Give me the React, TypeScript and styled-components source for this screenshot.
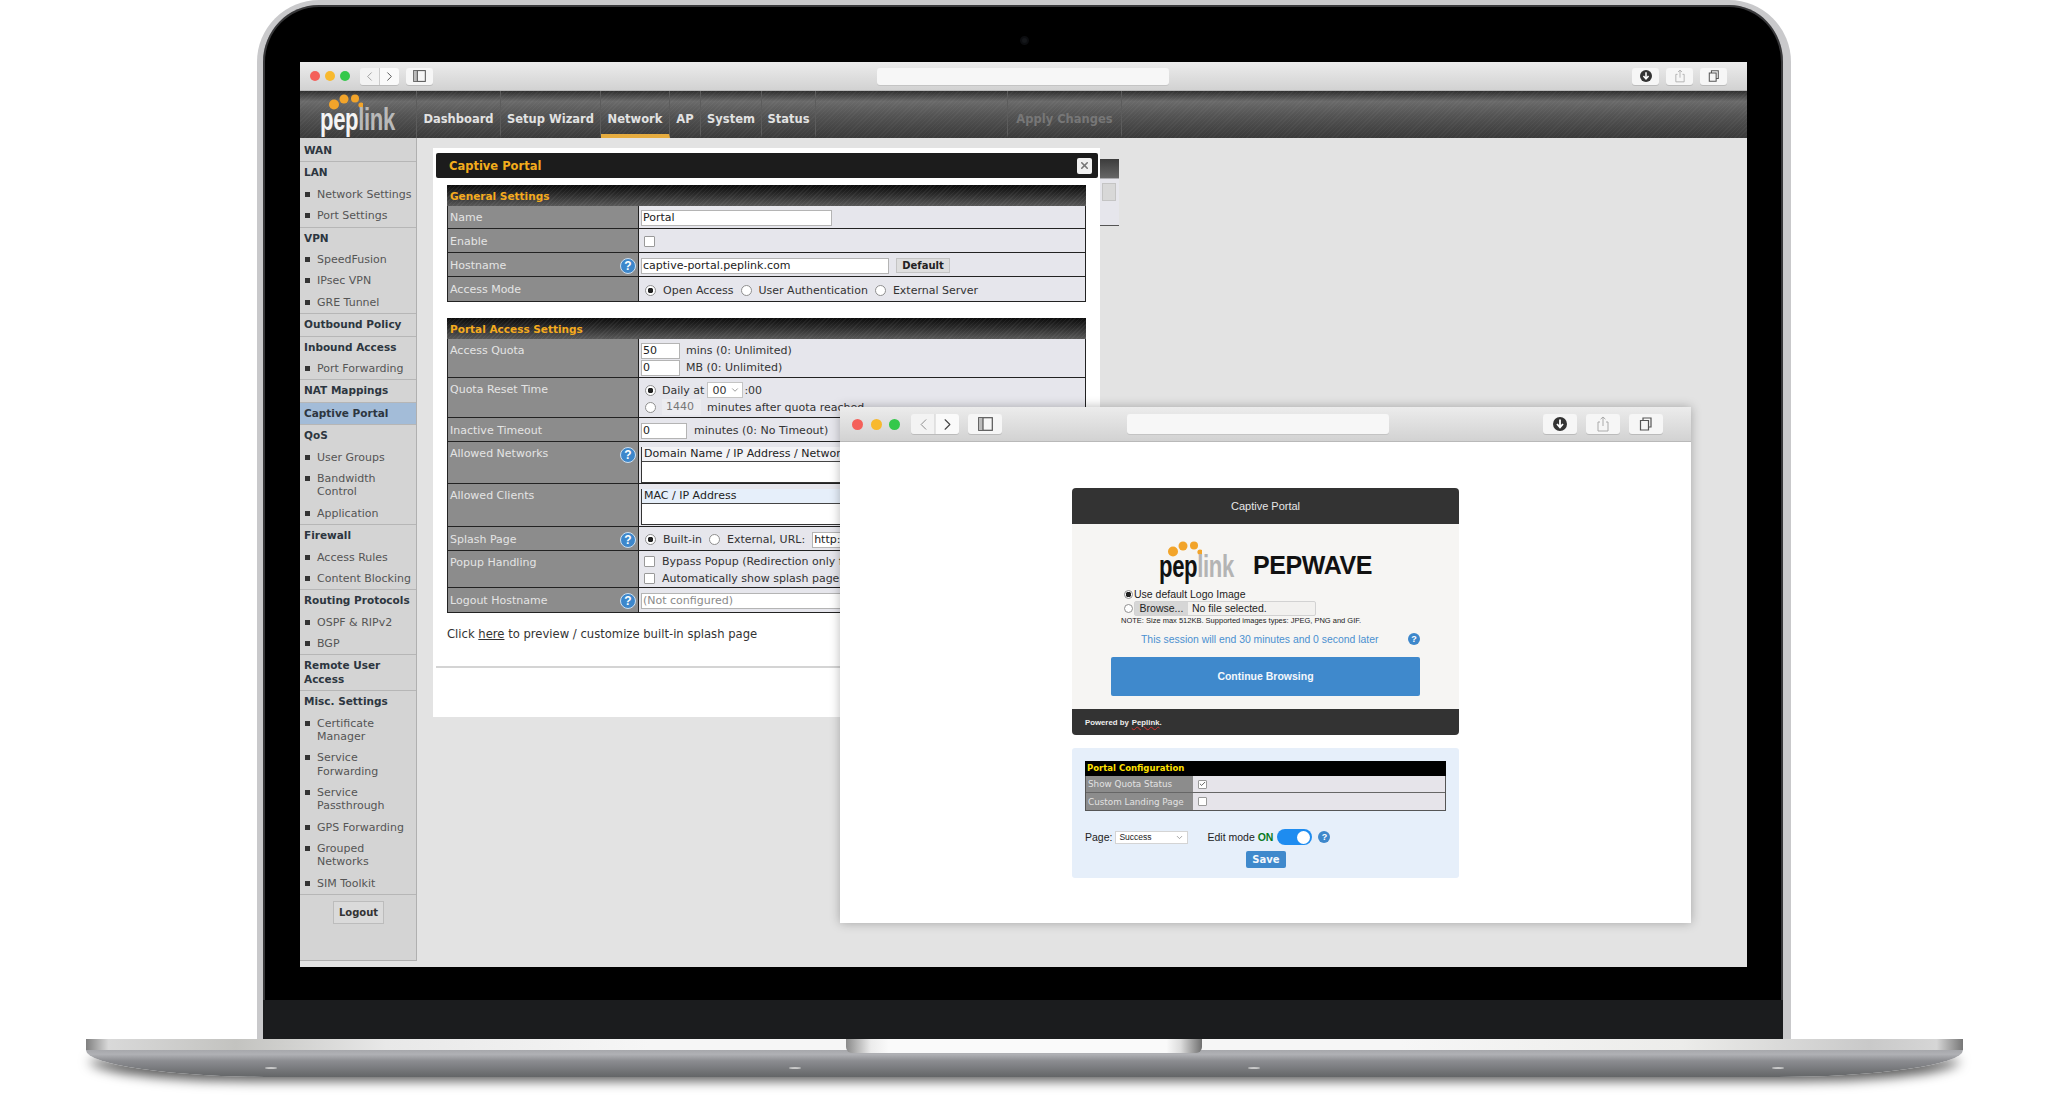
import React from "react"
import styled, { createGlobalStyle } from "styled-components"
import { ChevronLeft, ChevronRight, ChevronDown, X, Check } from "lucide-react"

const GlobalStyle = createGlobalStyle`
    html, body {
        margin: 0;
        padding: 0;
        background: #fff;
        font-family: "DejaVu Sans", Verdana, sans-serif;
    }
    * {
        box-sizing: border-box;
    }
`

const menu: { title: string; active?: boolean; items?: string[] }[] = [
    { title: "WAN" },
    { title: "LAN", items: ["Network Settings", "Port Settings"] },
    { title: "VPN", items: ["SpeedFusion", "IPsec VPN", "GRE Tunnel"] },
    { title: "Outbound Policy" },
    { title: "Inbound Access", items: ["Port Forwarding"] },
    { title: "NAT Mappings" },
    { title: "Captive Portal", active: true },
    { title: "QoS", items: ["User Groups", "Bandwidth Control", "Application"] },
    { title: "Firewall", items: ["Access Rules", "Content Blocking"] },
    { title: "Routing Protocols", items: ["OSPF & RIPv2", "BGP"] },
    { title: "Remote User Access" },
    {
        title: "Misc. Settings",
        items: [
            "Certificate Manager",
            "Service Forwarding",
            "Service Passthrough",
            "GPS Forwarding",
            "Grouped Networks",
            "SIM Toolkit",
        ],
    },
]

const tabs = [
    { label: "Dashboard", width: 84 },
    { label: "Setup Wizard", width: 100 },
    { label: "Network", width: 69, active: true },
    { label: "AP", width: 31 },
    { label: "System", width: 61 },
    { label: "Status", width: 54 },
]

const WindowBar: React.FC<{ $big?: boolean }> = ({ $big }) => (
    <Chrome $big={$big}>
        <Dots $big={$big}>
            <Dot $color="#f4605a" $big={$big} />
            <Dot $color="#f8b92e" $big={$big} />
            <Dot $color="#34c84a" $big={$big} />
        </Dots>
        <NavPair $big={$big}>
            <ChevronLeft size={$big ? 19 : 15} strokeWidth={1.2} color="#888" />
            <ChevronRight size={$big ? 19 : 15} strokeWidth={1.4} color="#444" />
        </NavPair>
        <ChromeBtn $big={$big}>
            <svg width={$big ? 15 : 13} height={$big ? 14 : 12} viewBox="0 0 15 14">
                <rect x="0.7" y="0.7" width="13.6" height="12.6" fill="none" stroke="#555" strokeWidth="1.2" />
                <rect x="1" y="1" width="4" height="12" fill="#bbb" />
                <path d="M5 1v12" stroke="#555" strokeWidth="1.2" />
            </svg>
        </ChromeBtn>
        <UrlBox $big={$big} />
        <ChromeBtn $big={$big}>
            <svg width={$big ? 14 : 12} height={$big ? 14 : 12} viewBox="0 0 14 14">
                <circle cx="7" cy="7" r="7" fill="#333" />
                <path d="M7 2.5v7M4 7l3 3.4L10 7" fill="none" stroke="#fff" strokeWidth="1.8" />
            </svg>
        </ChromeBtn>
        <ChromeBtn $big={$big}>
            <svg width={$big ? 12 : 10} height={$big ? 16 : 14} viewBox="0 0 12 16">
                <path d="M3 6H1v9h10V6H9M6 10V1M3.6 3.2 6 1l2.4 2.2" fill="none" stroke="#aaa" strokeWidth="1" />
            </svg>
        </ChromeBtn>
        <ChromeBtn $big={$big}>
            <svg width={$big ? 14 : 12} height={$big ? 14 : 12} viewBox="0 0 14 14">
                <path d="M4 3V1h8v9h-2M1.5 3.5h8v9.5h-8z" fill="none" stroke="#555" strokeWidth="1.2" />
            </svg>
        </ChromeBtn>
    </Chrome>
)

const Logo: React.FC<{ $dark?: boolean }> = ({ $dark }) => (
    <LogoBox>
        <LogoDots width="34" height="16" viewBox="0 0 34 16">
            <circle cx="5" cy="10.5" r="5" fill="#f2a42a" />
            <circle cx="15" cy="5" r="4.5" fill="#f2a42a" />
            <circle cx="26" cy="4.5" r="4" fill="#f2a42a" />
            <circle cx="32" cy="11" r="2.6" fill="#f2a42a" />
        </LogoDots>
        <LogoText $dark={$dark}>
            pep<span>link</span>
        </LogoText>
    </LogoBox>
)

const App: React.FC = () => {
    return (
        <Page>
            <GlobalStyle />
            <Lid>
                <Bezel>
                    <Camera />
                    <Screen>
                        <WindowBar />
                        <TopNav>
                            <LogoCell>
                                <Logo />
                            </LogoCell>
                            {tabs.map((t) => (
                                <Tab key={t.label} $active={t.active} $w={t.width}>
                                    {t.label}
                                </Tab>
                            ))}
                            <ApplyTab $w={115}>Apply Changes</ApplyTab>
                        </TopNav>
                        <Body>
                            <Sidebar>
                                {menu.map((g) => (
                                    <Group key={g.title}>
                                        <GroupTitle $active={g.active}>{g.title}</GroupTitle>
                                        {g.items?.map((i) => <MenuItem key={i}>{i}</MenuItem>)}
                                    </Group>
                                ))}
                                <LogoutWrap>
                                    <LogoutBtn>Logout</LogoutBtn>
                                </LogoutWrap>
                            </Sidebar>
                            <Content>
                                <Modal>
                                    <ModalTitle>
                                        Captive Portal
                                        <CloseBtn>
                                            <X size={11} strokeWidth={3.5} color="#777" />
                                        </CloseBtn>
                                    </ModalTitle>
                                    <FormTable>
                                        <TableHead>General Settings</TableHead>
                                        <Row $h={23}>
                                            <Label>Name</Label>
                                            <Value>
                                                <TextBox $w={191}>Portal</TextBox>
                                            </Value>
                                        </Row>
                                        <Row $h={24}>
                                            <Label>Enable</Label>
                                            <Value>
                                                <Tick />
                                            </Value>
                                        </Row>
                                        <Row $h={24}>
                                            <Label>
                                                Hostname
                                                <Help>?</Help>
                                            </Label>
                                            <Value>
                                                <TextBox $w={248}>captive-portal.peplink.com</TextBox>
                                                <DefaultBtn>Default</DefaultBtn>
                                            </Value>
                                        </Row>
                                        <Row $h={24}>
                                            <Label>Access Mode</Label>
                                            <Value $low>
                                                <Radio $on />
                                                <span>Open Access</span>
                                                <Radio />
                                                <span>User Authentication</span>
                                                <Radio />
                                                <span>External Server</span>
                                            </Value>
                                        </Row>
                                    </FormTable>
                                    <FormTable $second>
                                        <TableHead>Portal Access Settings</TableHead>
                                        <Row $h={39}>
                                            <Label $top>Access Quota</Label>
                                            <StackValue>
                                                <Line>
                                                    <TextBox $w={39}>50</TextBox>
                                                    <span>mins (0: Unlimited)</span>
                                                </Line>
                                                <Line>
                                                    <TextBox $w={39}>0</TextBox>
                                                    <span>MB (0: Unlimited)</span>
                                                </Line>
                                            </StackValue>
                                        </Row>
                                        <Row $h={40}>
                                            <Label $top>Quota Reset Time</Label>
                                            <StackValue>
                                                <Line>
                                                    <Radio $on />
                                                    <span>Daily at</span>
                                                    <SmallSelect>
                                                        00
                                                        <ChevronDown size={10} color="#888" />
                                                    </SmallSelect>
                                                    <span>:00</span>
                                                </Line>
                                                <Line>
                                                    <Radio />
                                                    <MutedBox>1440</MutedBox>
                                                    <span>minutes after quota reached</span>
                                                </Line>
                                            </StackValue>
                                        </Row>
                                        <Row $h={24}>
                                            <Label>Inactive Timeout</Label>
                                            <Value>
                                                <TextBox $w={46}>0</TextBox>
                                                <span>minutes (0: No Timeout)</span>
                                            </Value>
                                        </Row>
                                        <Row $h={42}>
                                            <Label $top>
                                                Allowed Networks
                                                <Help>?</Help>
                                            </Label>
                                            <Value $top>
                                                <ListBox>
                                                    <ListHead>Domain Name / IP Address / Network Mask</ListHead>
                                                </ListBox>
                                            </Value>
                                        </Row>
                                        <Row $h={43}>
                                            <Label $top>Allowed Clients</Label>
                                            <Value $top>
                                                <ListBox>
                                                    <ListHead $blue>MAC / IP Address</ListHead>
                                                </ListBox>
                                            </Value>
                                        </Row>
                                        <Row $h={24}>
                                            <Label>
                                                Splash Page
                                                <Help>?</Help>
                                            </Label>
                                            <Value>
                                                <Radio $on />
                                                <span>Built-in</span>
                                                <Radio />
                                                <span>External, URL:</span>
                                                <TextBox $w={200}>http://</TextBox>
                                            </Value>
                                        </Row>
                                        <Row $h={37}>
                                            <Label $top>Popup Handling</Label>
                                            <StackValue>
                                                <Line>
                                                    <Tick />
                                                    <span>Bypass Popup (Redirection only for HTTP)</span>
                                                </Line>
                                                <Line>
                                                    <Tick />
                                                    <span>Automatically show splash page</span>
                                                </Line>
                                            </StackValue>
                                        </Row>
                                        <Row $h={24}>
                                            <Label>
                                                Logout Hostname
                                                <Help>?</Help>
                                            </Label>
                                            <Value>
                                                <TextBox $w={300} $muted>
                                                    (Not configured)
                                                </TextBox>
                                            </Value>
                                        </Row>
                                    </FormTable>
                                    <PreviewNote>
                                        Click <u>here</u> to preview / customize built-in splash page
                                    </PreviewNote>
                                    <ModalRule />
                                </Modal>
                                <BehindPanel>
                                    <BehindBox />
                                </BehindPanel>
                            </Content>
                        </Body>
                        <PopupWindow>
                            <WindowBar $big />
                            <PopupBody>
                                <PortalCard>
                                    <CardHead>Captive Portal</CardHead>
                                    <CardBody>
                                        <BrandRow>
                                            <Logo $dark />
                                            <Pepwave>PEPWAVE</Pepwave>
                                        </BrandRow>
                                        <UploadLine>
                                            <Radio $on $small />
                                            Use default Logo Image
                                        </UploadLine>
                                        <UploadLine>
                                            <Radio $small />
                                            <FileField>
                                                <Browse>Browse...</Browse>
                                                No file selected.
                                            </FileField>
                                        </UploadLine>
                                        <UploadNote>
                                            NOTE: Size max 512KB. Supported images types: JPEG, PNG and GIF.
                                        </UploadNote>
                                        <SessionLine>
                                            This session will end 30 minutes and 0 second later
                                            <Help $small>?</Help>
                                        </SessionLine>
                                        <ContinueBtn>Continue Browsing</ContinueBtn>
                                    </CardBody>
                                    <CardFoot>
                                        Powered by <RedLine>Peplink</RedLine>.
                                    </CardFoot>
                                </PortalCard>
                                <ConfigPanel>
                                    <ConfigTable>
                                        <ConfigHead>Portal Configuration</ConfigHead>
                                        <ConfigRow>
                                            <ConfigLabel>Show Quota Status</ConfigLabel>
                                            <ConfigValue>
                                                <Tick $small>
                                                    <Check size={8} strokeWidth={2.6} color="#333" />
                                                </Tick>
                                            </ConfigValue>
                                        </ConfigRow>
                                        <ConfigRow>
                                            <ConfigLabel>Custom Landing Page</ConfigLabel>
                                            <ConfigValue>
                                                <Tick $small />
                                            </ConfigValue>
                                        </ConfigRow>
                                    </ConfigTable>
                                    <PageRow>
                                        Page:
                                        <PageSelect>
                                            Success
                                            <ChevronDown size={9} color="#888" />
                                        </PageSelect>
                                        <EditMode>
                                            Edit mode <b>ON</b>
                                        </EditMode>
                                        <Toggle />
                                        <Help $small>?</Help>
                                    </PageRow>
                                    <SaveBtn>Save</SaveBtn>
                                </ConfigPanel>
                            </PopupBody>
                        </PopupWindow>
                    </Screen>
                </Bezel>
                <Chin />
            </Lid>
            <BaseStrip>
                <Notch />
            </BaseStrip>
            <BaseBody>
                <FootPair>
                    <Foot />
                    <Foot />
                </FootPair>
                <FootPair>
                    <Foot />
                    <Foot />
                </FootPair>
            </BaseBody>
        </Page>
    )
}

const Page = styled.div`
    width: 2048px;
    height: 1097px;
    overflow: hidden;
    background: #fff;
    display: flex;
    flex-direction: column;
    align-items: center;
`

const Lid = styled.div`
    width: 1534px;
    height: 1039px;
    flex: none;
    border: solid #c9c9cb;
    border-width: 5px 8px 0 6px;
    border-radius: 62px 62px 0 0;
    background: #000;
    overflow: hidden;
    box-shadow: inset 0 0 0 2px #38383a;
    display: flex;
    flex-direction: column;
`

const Bezel = styled.div`
    flex: none;
    padding: 57px 36px 33px 37px;
    position: relative;
`

const Camera = styled.span`
    position: absolute;
    left: 757px;
    top: 31px;
    width: 9px;
    height: 9px;
    border-radius: 50%;
    background: #15171a;
    border: 2px solid #0c0d10;
`

const Screen = styled.div`
    width: 1447px;
    height: 905px;
    background: #e3e3e3;
    display: flex;
    flex-direction: column;
    position: relative;
    overflow: hidden;
`

const Chin = styled.div`
    flex: 1;
    background: #1b1c1e;
`

const BaseStrip = styled.div`
    width: 1877px;
    height: 11px;
    flex: none;
    display: flex;
    justify-content: center;
    background: linear-gradient(
        90deg,
        #7f7f7f 0,
        #d9d9d9 1.2%,
        #c3c3c0 8%,
        #e8e8e8 16%,
        #f6f6f6 30%,
        #f6f6f6 70%,
        #ececea 85%,
        #c9c9c9 95%,
        #d6d6d6 98.6%,
        #777 100%
    );
    position: relative;
    z-index: 2;
`

const Notch = styled.div`
    width: 356px;
    height: 14px;
    flex: none;
    margin-left: -1px;
    border-radius: 0 0 6px 6px;
    background: linear-gradient(
        90deg,
        #8a8a8a 0,
        #ececec 7%,
        #fafafa 12%,
        #fafafa 90%,
        #dcdcdc 94%,
        #6f6f6f 100%
    );
`

const BaseBody = styled.div`
    width: 1877px;
    height: 27px;
    flex: none;
    display: flex;
    justify-content: space-between;
    padding: 17px 179px 0;
    background: linear-gradient(180deg, #a6a7ab 0, #b0b1b5 16%, #8c8d91 40%, #636567 100%);
    border-radius: 0 0 190px 190px / 0 0 27px 27px;
    box-shadow: 0 7px 12px -3px rgba(0, 0, 0, 0.65);
`

const FootPair = styled.div`
    width: 536px;
    display: flex;
    justify-content: space-between;
    align-items: flex-start;
`

const Foot = styled.span`
    width: 12px;
    height: 2px;
    border-radius: 50%;
    background: #c9c9c9;
`

const Chrome = styled.div<{ $big?: boolean }>`
    flex: none;
    height: ${({ $big }) => ($big ? 35 : 29)}px;
    display: flex;
    align-items: center;
    padding: ${({ $big }) => ($big ? "0 28px 0 12px" : "0 20px 0 10px")};
    gap: ${({ $big }) => ($big ? 9 : 7)}px;
    background: linear-gradient(180deg, #ececec, #d2d2d2);
    border-bottom: 1px solid #b9b9b9;
`

const Dots = styled.div<{ $big?: boolean }>`
    display: flex;
    gap: ${({ $big }) => ($big ? 7.5 : 5)}px;
    margin-right: ${({ $big }) => ($big ? 2 : 3)}px;
`

const Dot = styled.span<{ $color: string; $big?: boolean }>`
    width: ${({ $big }) => ($big ? 11 : 10)}px;
    height: ${({ $big }) => ($big ? 11 : 10)}px;
    border-radius: 50%;
    background: ${({ $color }) => $color};
`

const NavPair = styled.div<{ $big?: boolean }>`
    width: ${({ $big }) => ($big ? 48 : 39)}px;
    height: ${({ $big }) => ($big ? 20 : 17)}px;
    display: flex;
    align-items: center;
    justify-content: space-around;
    background: linear-gradient(90deg, #f3f3f3 48%, #ccc 50%, #fafafa 52%);
    border-radius: 3px;
    box-shadow: 0 1px 0 #bbb;
`

const ChromeBtn = styled.div<{ $big?: boolean }>`
    width: ${({ $big }) => ($big ? 34 : 27)}px;
    height: ${({ $big }) => ($big ? 20 : 17)}px;
    display: flex;
    align-items: center;
    justify-content: center;
    background: #f6f6f6;
    border-radius: 3px;
    box-shadow: 0 1px 0 #bbb;
`

const UrlBox = styled.div<{ $big?: boolean }>`
    width: ${({ $big }) => ($big ? 262 : 292)}px;
    height: ${({ $big }) => ($big ? 20 : 17)}px;
    margin-left: ${({ $big }) => ($big ? 116 : 437)}px;
    margin-right: auto;
    background: #f7f7f7;
    border-radius: 3px;
    box-shadow: 0 1px 0 #c4c4c4;
`

const TopNav = styled.div`
    flex: none;
    height: 47px;
    display: flex;
    background: repeating-linear-gradient(
            135deg,
            rgba(255, 255, 255, 0.035) 0 1px,
            transparent 1px 3px
        ),
        linear-gradient(180deg, #2f2f2f 0, #6a6a6a 22%, #555 50%, #3a3a3a 100%);
`

const LogoCell = styled.div`
    width: 117px;
    flex: none;
    padding: 3px 0 0 20px;
    border-right: 1px solid #5c5c5c;
`

const LogoBox = styled.div`
    width: 80px;
    display: flex;
    flex-direction: column;
`

const LogoDots = styled.svg`
    margin-left: 9px;
    flex: none;
`

const LogoText = styled.div<{ $dark?: boolean }>`
    font-family: "Liberation Sans", Arial, sans-serif;
    font-weight: 700;
    font-size: 32px;
    line-height: 27px;
    margin-top: -4px;
    letter-spacing: -0.5px;
    white-space: nowrap;
    transform: scaleX(0.69);
    transform-origin: left center;
    color: ${({ $dark }) => ($dark ? "#111" : "#f4f4f4")};

    span {
        color: ${({ $dark }) => ($dark ? "#b4b4b4" : "#b9b9b9")};
    }
`

const Tab = styled.div<{ $active?: boolean; $w: number }>`
    flex: none;
    width: ${({ $w }) => $w}px;
    height: 47px;
    padding-top: 12px;
    display: flex;
    align-items: center;
    justify-content: center;
    font-size: 11.5px;
    font-weight: 700;
    color: #e2e2e2;
    border-right: 1px solid #5c5c5c;
    border-bottom: 4px solid ${({ $active }) => ($active ? "#e6ac3f" : "transparent")};
`

const ApplyTab = styled(Tab)`
    margin-left: 191px;
    color: #777;
    border-left: 1px solid #5c5c5c;
`

const Body = styled.div`
    flex: 1;
    display: flex;
    align-items: flex-start;
`

const Sidebar = styled.div`
    width: 117px;
    height: 823px;
    flex: none;
    padding-top: 2px;
    background: #d4d4d4;
    border-right: 1px solid #b0b0b0;
    border-bottom: 1px solid #b0b0b0;
`

const Group = styled.div`
    border-bottom: 1px solid #b6b6b6;
`

const GroupTitle = styled.div<{ $active?: boolean }>`
    padding: 4px 4px;
    font-size: 10.5px;
    line-height: 13.45px;
    font-weight: 700;
    color: #2d3640;
    background: ${({ $active }) => ($active ? "#a3bcd8" : "transparent")};
`

const MenuItem = styled.div`
    position: relative;
    padding: 4px 0 4px 17px;
    font-size: 11px;
    line-height: 13.35px;
    color: #555;

    &::before {
        content: "";
        position: absolute;
        left: 5px;
        top: 8px;
        width: 5px;
        height: 5px;
        background: #333;
    }
`

const LogoutWrap = styled.div`
    padding: 6px 0 0 33px;
`

const LogoutBtn = styled.div`
    width: 51px;
    height: 23px;
    display: flex;
    align-items: center;
    justify-content: center;
    font-size: 10px;
    font-weight: 700;
    color: #333;
    background: #dadada;
    border: 1px solid #bcbcbc;
`

const Content = styled.div`
    flex: 1;
    display: flex;
    align-items: flex-start;
    padding: 10px 0 0 16px;
`

const Modal = styled.div`
    width: 667px;
    height: 569px;
    flex: none;
    padding: 5px 2px 0 3px;
    background: #fff;
    font-size: 11px;
    color: #333;
`

const ModalTitle = styled.div`
    height: 25px;
    display: flex;
    align-items: center;
    justify-content: space-between;
    padding: 0 6px 0 13px;
    background: #1c1c1c;
    border-radius: 2px;
    color: #f3ad1c;
    font-size: 11.5px;
    font-weight: 700;
`

const CloseBtn = styled.span`
    width: 15px;
    height: 16px;
    display: flex;
    align-items: center;
    justify-content: center;
    background: #f1f1f1;
    border-radius: 2px;
`

const FormTable = styled.div<{ $second?: boolean }>`
    width: 639px;
    margin: ${({ $second }) => ($second ? "16px 0 0 11px" : "7px 0 0 11px")};
    border: 1px solid #222;
    border-top: 0;
`

const TableHead = styled.div`
    height: 21px;
    margin: 0 -1px;
    padding: 2px 3px 0;
    font-size: 10.5px;
    font-weight: 700;
    line-height: 19px;
    color: #f5ab1e;
    background: repeating-linear-gradient(
            135deg,
            rgba(255, 255, 255, 0.05) 0 1px,
            transparent 1px 3px
        ),
        linear-gradient(180deg, #0c0c0c 0, #2b2b2b 45%, #585858 100%);
`

const Row = styled.div<{ $h: number }>`
    display: grid;
    grid-template-columns: 191px 1fr;
    height: ${({ $h }) => $h}px;
    border-bottom: 1px solid #222;

    &:last-child {
        border-bottom: 0;
    }
`

const Label = styled.div<{ $top?: boolean }>`
    display: flex;
    align-items: ${({ $top }) => ($top ? "flex-start" : "center")};
    justify-content: space-between;
    padding: ${({ $top }) => ($top ? "5px 2px 0 2px" : "2px 2px 0 2px")};
    color: #e4e4e4;
    background: #8c8c8c;
    border-right: 1px solid #222;
    line-height: 14px;
    white-space: nowrap;
`

const Value = styled.div<{ $top?: boolean; $low?: boolean }>`
    display: flex;
    align-items: ${({ $top }) => ($top ? "flex-start" : "center")};
    gap: 7px;
    padding: ${({ $top, $low }) => ($top ? "5px 0 0 2px" : $low ? "3px 0 0 2px" : "2px 0 0 2px")};
    background: #e6e6ec;
    white-space: nowrap;
    overflow: hidden;
`

const StackValue = styled.div`
    display: flex;
    flex-direction: column;
    justify-content: center;
    gap: 1px;
    padding: 2px 0 0 2px;
    background: #e6e6ec;
    white-space: nowrap;
    overflow: hidden;
`

const Line = styled.div`
    display: flex;
    align-items: center;
    gap: 6px;
    min-height: 16px;
`

const TextBox = styled.div<{ $w: number; $muted?: boolean }>`
    flex: none;
    width: ${({ $w }) => $w}px;
    height: 16px;
    padding: 0 1px;
    line-height: 14px;
    background: #fff;
    border: 1px solid #b4b4b4;
    color: ${({ $muted }) => ($muted ? "#8a8a8a" : "#222")};
`

const MutedBox = styled.div`
    width: 39px;
    height: 16px;
    padding-left: 4px;
    line-height: 15px;
    color: #777;
    background: #ececf0;
`

const DefaultBtn = styled.div`
    width: 54px;
    height: 15px;
    display: flex;
    align-items: center;
    justify-content: center;
    font-size: 10px;
    font-weight: 700;
    color: #222;
    background: #dedede;
    border: 1px solid #c4c4c4;
`

const Tick = styled.span<{ $small?: boolean }>`
    flex: none;
    width: ${({ $small }) => ($small ? 9 : 11)}px;
    height: ${({ $small }) => ($small ? 9 : 11)}px;
    margin: 0 ${({ $small }) => ($small ? 0 : 1)}px 0 ${({ $small }) => ($small ? 0 : 3)}px;
    display: inline-flex;
    align-items: center;
    justify-content: center;
    background: #fff;
    border: 1px solid #999;
    border-radius: 1px;
`

const Radio = styled.span<{ $on?: boolean; $small?: boolean }>`
    flex: none;
    width: ${({ $small }) => ($small ? 9 : 11)}px;
    height: ${({ $small }) => ($small ? 9 : 11)}px;
    margin-left: ${({ $small }) => ($small ? 1 : 0)}px;
    border-radius: 50%;
    border: 1px solid #8f8f8f;
    background: ${({ $on }) =>
        $on ? "radial-gradient(circle, #222 0 2.6px, #fff 3px)" : "#fff"};

    &:first-child {
        margin-left: ${({ $small }) => ($small ? 1 : 4)}px;
    }
`

const Help = styled.span<{ $small?: boolean }>`
    flex: none;
    width: ${({ $small }) => ($small ? 12 : 16)}px;
    height: ${({ $small }) => ($small ? 12 : 16)}px;
    display: inline-flex;
    align-items: center;
    justify-content: center;
    border-radius: 50%;
    font-family: "Liberation Sans", Arial, sans-serif;
    font-size: ${({ $small }) => ($small ? 9 : 12)}px;
    font-weight: 700;
    color: #fff;
    background: #3d87cb;
    border: ${({ $small }) => ($small ? "0" : "1px solid #cfe0f0")};
`

const SmallSelect = styled.div`
    width: 36px;
    height: 16px;
    display: flex;
    align-items: center;
    justify-content: space-between;
    padding: 0 2px 0 4px;
    margin: 0 -5px 0 -3px;
    background: #fff;
    border: 1px solid #c4c4c4;
`

const ListBox = styled.div`
    width: 500px;
    height: 36px;
    background: #fff;
    border: 1px solid #333;
    border-top: 0;
`

const ListHead = styled.div<{ $blue?: boolean }>`
    height: 15px;
    padding-left: 2px;
    line-height: 14px;
    color: #222;
    background: ${({ $blue }) => ($blue ? "#e6effa" : "#f3f3f6")};
    border-bottom: 1px solid #444;
`

const PreviewNote = styled.div`
    margin: 14px 0 0 11px;
    font-size: 11.6px;
    line-height: 14px;
    white-space: nowrap;
`

const ModalRule = styled.div`
    height: 2px;
    margin: 25px 0 0 0;
    background: #d4d4d4;
`

const BehindPanel = styled.div`
    width: 19px;
    height: 67px;
    flex: none;
    margin-top: 11px;
    padding: 24px 3px 0 0;
    display: flex;
    justify-content: flex-end;
    background: linear-gradient(180deg, #3c3c3c 0, #666 29%, #e6e6ec 30%);
    border-bottom: 1px solid #555;
`

const BehindBox = styled.div`
    width: 14px;
    height: 18px;
    background: #d8d8d8;
    border: 1px solid #c4c4c4;
`

const PopupWindow = styled.div`
    position: absolute;
    left: 540px;
    top: 345px;
    width: 851px;
    height: 516px;
    display: flex;
    flex-direction: column;
    background: #fff;
    box-shadow: 0 0 10px rgba(0, 0, 0, 0.28);
`

const PopupBody = styled.div`
    flex: 1;
    padding-top: 46px;
    display: flex;
    flex-direction: column;
    align-items: center;
`

const PortalCard = styled.div`
    width: 387px;
    font-family: "Liberation Sans", Arial, sans-serif;
    background: #f6f5f3;
    border-radius: 4px;
    overflow: hidden;
`

const CardHead = styled.div`
    height: 36px;
    display: flex;
    align-items: center;
    justify-content: center;
    font-size: 11px;
    color: #e6e6e6;
    background: #333;
`

const CardBody = styled.div`
    height: 185px;
    padding: 17px 39px 0;
    display: flex;
    flex-direction: column;
`

const BrandRow = styled.div`
    display: flex;
    align-items: flex-end;
    gap: 14px;
    margin-left: 48px;
`

const Pepwave = styled.div`
    font-size: 25px;
    line-height: 29px;
    font-weight: 700;
    letter-spacing: -0.4px;
    color: #111;
`

const UploadLine = styled.div`
    display: flex;
    align-items: center;
    gap: 1px;
    margin-left: 12px;
    height: 14px;
    font-size: 10.5px;
    color: #222;
    white-space: nowrap;

    &:nth-child(2) {
        margin-top: 7px;
    }
`

const FileField = styled.div`
    width: 182px;
    height: 15px;
    display: flex;
    align-items: center;
    gap: 4px;
    background: #f2f1ef;
    border: 1px solid #d2d2d2;
    border-radius: 2px;
`

const Browse = styled.span`
    width: 53px;
    height: 100%;
    display: flex;
    align-items: center;
    justify-content: center;
    background: #d6d6d6;
`

const UploadNote = styled.div`
    margin: 0 0 0 10px;
    font-size: 7.5px;
    line-height: 11.5px;
    color: #222;
    white-space: nowrap;
`

const SessionLine = styled.div`
    display: flex;
    align-items: center;
    justify-content: space-between;
    margin: 6px 0 0 30px;
    font-size: 10.4px;
    line-height: 13px;
    color: #4a90d0;
    white-space: nowrap;
`

const ContinueBtn = styled.div`
    height: 39px;
    margin-top: 11px;
    display: flex;
    align-items: center;
    justify-content: center;
    font-size: 10.5px;
    font-weight: 700;
    color: #f4f8fc;
    background: #3f89cc;
    border-radius: 2px;
`

const CardFoot = styled.div`
    height: 26px;
    display: flex;
    align-items: center;
    gap: 3px;
    padding-left: 13px;
    font-size: 7.8px;
    font-weight: 700;
    color: #eee;
    background: #333;
`

const RedLine = styled.span`
    margin-right: -3px;
    text-decoration: underline wavy #d23030 1px;
`

const ConfigPanel = styled.div`
    width: 387px;
    height: 130px;
    margin-top: 13px;
    padding: 13px 13px 0;
    display: flex;
    flex-direction: column;
    background: #e6effa;
    border-radius: 3px;
`

const ConfigTable = styled.div`
    border: 1px solid #555;
    border-top: 0;
`

const ConfigHead = styled.div`
    height: 15px;
    padding-left: 2px;
    margin: 0 -1px;
    font-size: 8.5px;
    font-weight: 700;
    line-height: 15px;
    color: #ffe000;
    background: #000;
`

const ConfigRow = styled.div`
    display: grid;
    grid-template-columns: 107px 1fr;
    height: 17px;
    border-bottom: 1px solid #666;

    &:last-child {
        border-bottom: 0;
    }
`

const ConfigLabel = styled.div`
    display: flex;
    align-items: center;
    padding-left: 2px;
    font-size: 8.8px;
    color: #e2e2e2;
    background: #8c8c8c;
    white-space: nowrap;
`

const ConfigValue = styled.div`
    display: flex;
    align-items: center;
    padding-left: 5px;
    background: #e6e4ea;
`

const PageRow = styled.div`
    display: flex;
    align-items: center;
    height: 18px;
    margin-top: 17px;
    font-family: "Liberation Sans", Arial, sans-serif;
    font-size: 10.5px;
    color: #222;
`

const PageSelect = styled.div`
    width: 73px;
    height: 13px;
    margin-left: 3px;
    display: flex;
    align-items: center;
    justify-content: space-between;
    padding: 0 3px 0 3px;
    font-size: 8.5px;
    background: #fff;
    border: 1px solid #d4d4d4;
`

const EditMode = styled.span`
    margin: 0 4px 0 19px;

    b {
        color: #0a7a1e;
    }
`

const Toggle = styled.span`
    width: 35px;
    height: 16px;
    margin-right: 6px;
    display: flex;
    justify-content: flex-end;
    align-items: center;
    padding-right: 2px;
    border-radius: 8px;
    background: #1e8cf0;

    &::after {
        content: "";
        width: 13px;
        height: 13px;
        border-radius: 50%;
        background: #fff;
    }
`

const SaveBtn = styled.div`
    width: 40px;
    height: 17px;
    margin: 5px 0 0 161px;
    display: flex;
    align-items: center;
    justify-content: center;
    font-size: 10px;
    font-weight: 700;
    color: #f4f8fc;
    background: #3f89cc;
    border-radius: 2px;
`

export default App
